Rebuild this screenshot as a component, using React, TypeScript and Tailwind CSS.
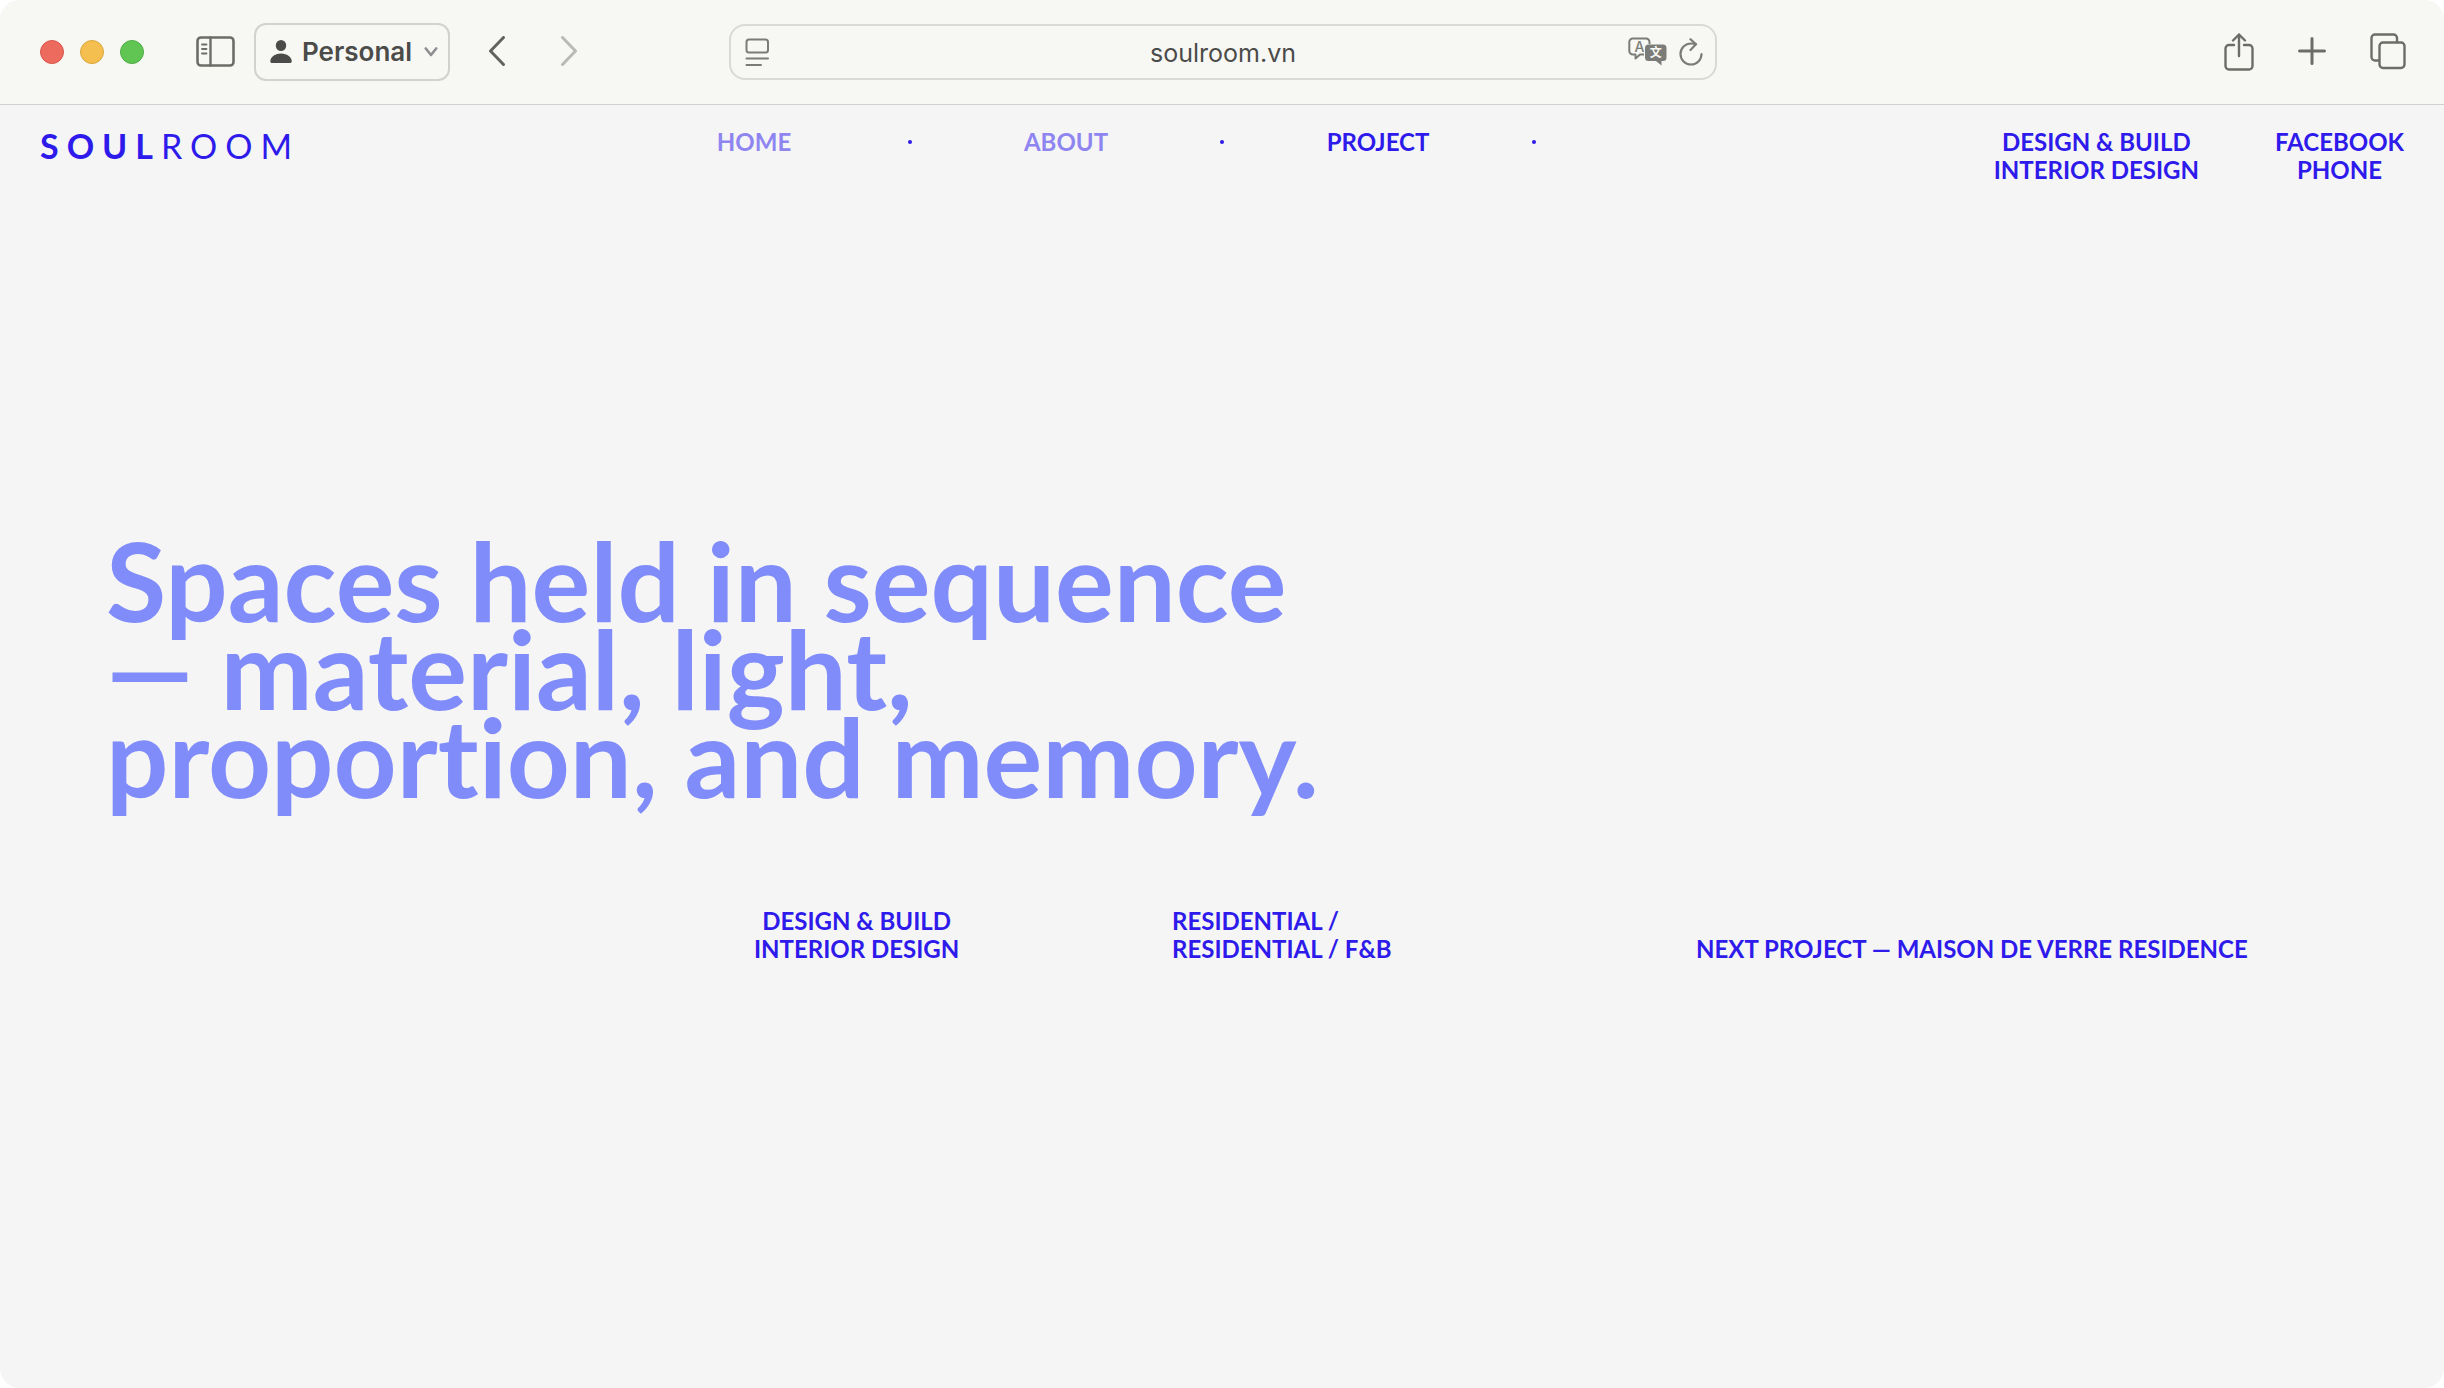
const navItems = [
  { label: "HOME", className: "text-[#8f85f1]" },
  { label: "ABOUT", className: "text-[#8f85f1]" },
  { label: "PROJECT", className: "text-[#2d1aeb]" },
];

const trafficLights = [
  { label: "Close", className: "bg-[#ed6a5e] border-[#d9574c]" },
  { label: "Minimize", className: "bg-[#f5bf4f] border-[#dba63b]" },
  { label: "Zoom", className: "bg-[#61c554] border-[#4fad43]" },
];

const BrowserBar = () => {
  return (
    <div className="grid grid-cols-[1fr_988px_1fr] items-center h-[105px] pl-10 pr-[38px] bg-[#f7f8f3] border-b border-[#d0d1cd] font-['Inter',sans-serif]">
      <div className="flex items-center">
        <div className="flex gap-4">
          {trafficLights.map((light) => (
            <button
              key={light.label}
              aria-label={light.label}
              className={`size-6 rounded-full border ${light.className}`}
            />
          ))}
        </div>

        <button aria-label="Show sidebar" className="ml-[52px]">
          <svg width="39" height="32" viewBox="0 0 39 32" fill="none" stroke="#6c6d68" strokeLinecap="round">
            <rect x="1.5" y="1.5" width="36" height="28" rx="3.5" strokeWidth="2.6" />
            <path d="M14.5 1.5v28" strokeWidth="2.4" />
            <path d="M6 8.5h4.5M6 13h4.5M6 17.5h4.5" strokeWidth="1.8" />
          </svg>
        </button>

        <button className="ml-[19px] flex h-[58px] w-[196px] items-center rounded-xl border-2 border-[#d1d2ce] pl-[14px] text-[#4b4b4a]">
          <svg width="22" height="24" viewBox="0 0 22 24" fill="currentColor">
            <ellipse cx="11" cy="5.5" rx="5.2" ry="5.5" />
            <path d="M2 23C.9 23 .3 22.300.3 21.200.3 17.500 4.400 13.500 11 13.500s10.700 4 10.700 7.700c0 1.100-.6 1.800-1.700 1.800z" />
          </svg>
          <span className="ml-[10px] text-[26px] leading-8 font-semibold">Personal</span>
          <svg className="ml-3" width="14" height="10" viewBox="0 0 14 10" fill="none" stroke="#8e8e92" strokeWidth="2.600" strokeLinecap="round" strokeLinejoin="round">
            <path d="M1.800 1.500 7 8l5.200-6.500" />
          </svg>
        </button>

        <button aria-label="Back" className="ml-[38px]">
          <svg width="18" height="32" viewBox="0 0 18 32" fill="none" stroke="#62635f" strokeWidth="3" strokeLinecap="round" strokeLinejoin="round">
            <path d="M15.500 1.500 2.500 15l13 13.500" />
          </svg>
        </button>
        <button aria-label="Forward" className="ml-[54px]">
          <svg width="18" height="32" viewBox="0 0 18 32" fill="none" stroke="#b9bab6" strokeWidth="3" strokeLinecap="round" strokeLinejoin="round">
            <path d="M2.500 1.500l13 13.500-13 13.500" />
          </svg>
        </button>
      </div>

      <div className="flex h-14 items-center rounded-2xl border-2 border-[#d9dad5] pr-3 pl-[14px]">
        <button aria-label="Page menu" className="mr-12">
          <svg width="25" height="28" viewBox="0 0 25 28" fill="none" stroke="#7b7c78" strokeWidth="2" strokeLinecap="round">
            <rect x="1.500" y="1.500" width="21.500" height="13" rx="2.500" />
            <path d="M1.500 20.500H23M1.500 27H16" />
          </svg>
        </button>
        <input
          aria-label="Address"
          defaultValue="soulroom.vn"
          className="min-w-0 flex-1 bg-transparent pt-[2px] text-center text-[25px] leading-8 text-[#4b4b4a] outline-none"
        />
        <button aria-label="Translate">
          <svg width="39" height="30" viewBox="0 0 39 30" fill="none">
            <path
              d="M16 17.500h-4L7.500 21.500v-4H5A3.500 3.500 0 0 1 1.300 14V5A3.500 3.500 0 0 1 5 1.500h13A3.500 3.500 0 0 1 21.500 5v2"
              stroke="#7b7c78"
              strokeWidth="2"
              strokeLinejoin="round"
            />
            <path d="M20.500 7.500H35a3.500 3.500 0 0 1 3.500 3.500v9.500A3.500 3.500 0 0 1 35 24h-1.500v4.500L28 24h-7.500a3.500 3.500 0 0 1-3.500-3.500V11a3.500 3.500 0 0 1 3.500-3.500z" fill="#7b7c78" />
            <text x="11.500" y="14.500" textAnchor="middle" fontSize="14" fontWeight="500" fill="#7b7c78">A</text>
            <text x="27.800" y="20" textAnchor="middle" fontSize="12" fontWeight="700" fill="#f7f8f3" fontFamily="Noto Sans CJK SC">文</text>
          </svg>
        </button>
        <button aria-label="Reload" className="ml-3">
          <svg width="24" height="28" viewBox="0 0 24 28" fill="none" stroke="#7b7c78" strokeWidth="2.200" strokeLinecap="round" strokeLinejoin="round">
            <path d="M22.500 16A10.500 10.500 0 1 1 12 5.500c2 0 3.500.2 4.800.6" />
            <path d="M11.500 1.200 17 6.300l-5.500 5.600" />
          </svg>
        </button>
      </div>

      <div className="flex items-center justify-end gap-11">
        <button aria-label="Share">
          <svg width="30" height="38" viewBox="0 0 30 38" fill="none" stroke="#6c6d68" strokeWidth="2.400" strokeLinecap="round" strokeLinejoin="round">
            <path d="M10 12H5a3.500 3.500 0 0 0-3.500 3.500v17.500A3.500 3.500 0 0 0 5 36.500h20a3.500 3.500 0 0 0 3.500-3.500V15.500A3.500 3.500 0 0 0 25 12h-5" />
            <path d="M15 23V1.500M9 7.500l6-6 6 6" />
          </svg>
        </button>
        <button aria-label="New tab">
          <svg width="28" height="30" viewBox="0 0 28 30" fill="none" stroke="#6c6d68" strokeWidth="3" strokeLinecap="round">
            <path d="M14 1.500v25M1.500 14h25" />
          </svg>
        </button>
        <button aria-label="Tab overview">
          <svg width="36" height="38" viewBox="0 0 36 38" fill="none" stroke="#6c6d68" strokeWidth="2.400" strokeLinejoin="round">
            <path d="M9 27.500H5A3.500 3.500 0 0 1 1.500 24V5A3.500 3.500 0 0 1 5 1.500h18.500A3.500 3.500 0 0 1 27 5v4" />
            <rect x="9.500" y="9.500" width="25" height="25.500" rx="3.500" />
          </svg>
        </button>
      </div>
    </div>
  );
};

const App = () => {
  return (
    <div className="min-h-screen bg-white flex flex-col">
      <div className="flex-1 flex flex-col overflow-hidden rounded-[20px] bg-[#f5f5f5]">
        <BrowserBar />

        <div className="font-['Lato',sans-serif] text-2xl leading-7 font-bold text-[#2d1aeb]">
          <header className="grid grid-cols-[53fr_78fr_66fr] px-10 pt-[23px]">
            <a href="#" className="text-[34px] leading-9 font-bold tracking-[8px]">
              SOUL<span className="font-normal">ROOM</span>
            </a>
            <nav className="grid grid-cols-6 justify-items-center">
              {navItems.map((item) => (
                <div key={item.label} className="contents">
                  <a href="#" className={item.className}>{item.label}</a>
                  <span className="flex h-7 items-center">
                    <span className="size-1 rounded-full bg-[#2d1aeb]" />
                  </span>
                </div>
              ))}
            </nav>
            <div className="flex justify-end gap-19 text-center">
              <div className="flex flex-col">
                <a href="#">DESIGN &amp; BUILD</a>
                <a href="#">INTERIOR DESIGN</a>
              </div>
              <div className="flex flex-col">
                <a href="#">FACEBOOK</a>
                <a href="#">PHONE</a>
              </div>
            </div>
          </header>

          <main className="px-[106px] pt-[351px]">
            <h1 className="text-[110px] leading-[88px] text-[#808cf9] [font-variant-ligatures:none]">
              Spaces held in sequence
              <br />
              — material, light,
              <br />
              proportion, and memory.
            </h1>
            <div className="mt-[108px] grid grid-cols-[648fr_418fr_524fr_642fr] items-end">
              <p className="col-start-2 justify-self-start text-center">
                DESIGN &amp; BUILD
                <br />
                INTERIOR DESIGN
              </p>
              <p>
                RESIDENTIAL /
                <br />
                RESIDENTIAL / F&amp;B
              </p>
              <a href="#" className="whitespace-nowrap">NEXT PROJECT — MAISON DE VERRE RESIDENCE</a>
            </div>
          </main>
        </div>
      </div>
    </div>
  );
};

export default App;
